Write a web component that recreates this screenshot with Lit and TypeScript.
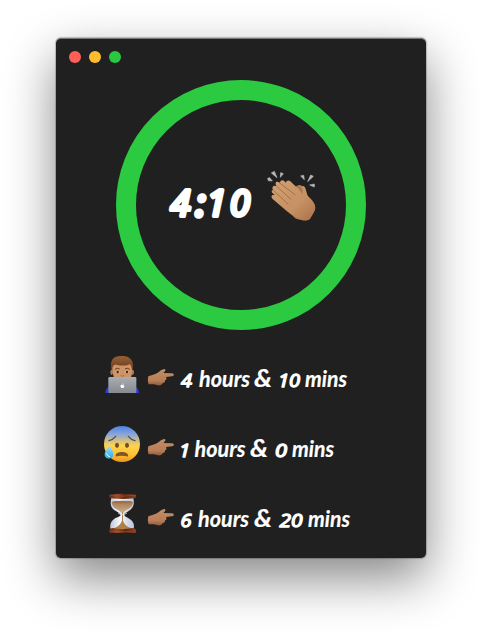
import { LitElement, html, css, svg } from "lit";
import { customElement, property } from "lit/decorators.js";

type Word = { text: string; x: number; width: number; kind: "num" | "word" | "amp" };

@customElement("clap-icon")
class ClapIcon extends LitElement {
  static styles = css`:host { display: block; } svg { display: block; width: 54px; height: 56px; }`;
  render() {
    return html`<svg viewBox="315 24 162 168">
      <defs><linearGradient id="skin" x1="0" y1="0" x2="1" y2="1">
        <stop offset="0" stop-color="#d2a173"/><stop offset=".6" stop-color="#c69163"/><stop offset="1" stop-color="#a9704a"/>
      </linearGradient></defs>
      <g fill="#b6b8ba" stroke="#b6b8ba" stroke-width="2" stroke-linejoin="round">
        <path d="M334 39L343 34L351 53Z"/><path d="M323 55L329 53L337 63L325 62Z"/><path d="M362 38L370 41L361 52Z"/>
        <path d="M422 48L431 46L433 59Z"/><path d="M452 45L460 49L443 65Z"/><path d="M449 75L463 72L463 81Z"/>
      </g>
      <path d="M401 92C406 77 417 71 426 78C433 83 432 94 436 103C442 113 456 121 465 136L464 150L437 181L410 177L399 164Z" fill="#b57f55"/>
      <path d="M402 167L420 170L414 177C405 177 400 172 399 166Z" fill="#9c6743"/>
      <path d="M340 91C333 83 341 74 348 79L349 76C343 68 350 62 357 67L360 69C360 61 367 58 373 63L378 69C378 61 385 59 391 64L427 98C433 89 421 81 428 78C438 77 438 98 444 108C453 118 461 123 465 137C468 146 464 154 459 162L450 177C441 184 426 182 415 177C403 171 389 161 380 153L338 117C331 110 336 102 344 106L342 103C332 96 334 89 341 91Z" fill="url(#skin)"/>
      <g fill="none" stroke="#9c6746" stroke-width="2.5" stroke-linecap="round">
        <path d="M359 69L405 104"/><path d="M350 79L393 118"/><path d="M341 92L384 132"/>
        <path d="M414 78Q423 91 426 99"/>
      </g>
    </svg>`;
  }
}

@customElement("pointer-icon")
class PointerIcon extends LitElement {
  static styles = css`:host { display: block; } svg { display: block; width: 29px; height: 20px; }`;
  render() {
    return html`<svg viewBox="156 51 87 60">
      <defs><linearGradient id="hand" x1="0" y1="0" x2="0" y2="1">
        <stop offset="0" stop-color="#c48d65"/><stop offset=".7" stop-color="#b97f58"/><stop offset="1" stop-color="#8d5a3c"/>
      </linearGradient></defs>
      <path d="M160 79C170 75 179 74 187 69C194 64 202 57 208 57C214 58 211 64 205 69L231 70C238 70 239 79 231 79L213 81C216 85 214 91 210 91C211 96 207 100 203 99C202 105 195 107 188 106L177 103L161 103C158 96 158 87 160 79Z" fill="url(#hand)"/>
      <path d="M193 82L210 81M195 91L208 91M193 99L201 99" fill="none" stroke="#ab7653" stroke-width="1.2" stroke-linecap="round"/>
    </svg>`;
  }
}

@customElement("row-icon")
class RowIcon extends LitElement {
  @property() name = "work";
  static styles = css`:host { display: block; } svg { display: block; width: 40px; height: 40px; }`;

  worker() {
    return html`<svg viewBox="24 8 120 120">
      <defs>
        <linearGradient id="hair" x1="0" y1="0" x2="0" y2="1"><stop offset="0" stop-color="#9a6038"/><stop offset="1" stop-color="#643719"/></linearGradient>
        <linearGradient id="lap" x1="0" y1="0" x2="0" y2="1"><stop offset="0" stop-color="#a9adb2"/><stop offset="1" stop-color="#85898f"/></linearGradient>
      </defs>
      <path d="M30 131C31 117 35 110 47 106L117 106C128 110 132 119 133 131Z" fill="#2438d4"/>
      <path d="M49 60C45 35 49 17 79 17C107 15 119 34 113 60Z" fill="url(#hair)"/>
      <ellipse cx="50" cy="66" rx="4" ry="8" fill="#b27a4f"/><ellipse cx="113" cy="66" rx="4" ry="8" fill="#b27a4f"/>
      <path d="M52 52C56 42 60 43 67 44C82 47 97 46 104 41C110 46 112 57 111 68C110 84 100 96 82 96C62 96 52 81 52 52Z" fill="#cc9467"/>
      <path d="M60 57Q67 51 74 56M90 56Q97 51 104 57" fill="none" stroke="#6b3d20" stroke-width="3"/>
      <ellipse cx="68" cy="65" rx="6" ry="4" fill="#e6dacd"/><ellipse cx="96" cy="65" rx="6" ry="4" fill="#e6dacd"/>
      <circle cx="68" cy="65" r="4" fill="#4d2711"/><circle cx="96" cy="65" r="4" fill="#4d2711"/>
      <path d="M77 76Q82 79 87 76" fill="none" stroke="#a56b43" stroke-width="3"/>
      <rect x="40" y="80" width="84" height="50" rx="4" fill="url(#lap)"/>
      <path d="M82 104C77 101 76 105 77 109C79 115 81 113 83 113C86 115 88 110 88 108C85 106 85 105 87 103C85 101 83 103 82 104ZM82 101Q83 98 85 97Q86 100 82 101" fill="#fff"/>
    </svg>`;
  }

  anxious() {
    return html`<svg viewBox="24 9 120 120">
      <defs>
        <linearGradient id="face" x1="0" y1="0" x2="0" y2="1"><stop offset="0" stop-color="#4f83df"/><stop offset=".22" stop-color="#86a3de"/><stop offset=".4" stop-color="#d0bd84"/><stop offset=".55" stop-color="#ffd34a"/><stop offset=".8" stop-color="#fcc034"/><stop offset="1" stop-color="#f0921a"/></linearGradient>
        <linearGradient id="drop" x1="0" y1="0" x2="0" y2="1"><stop offset="0" stop-color="#b9e9fb"/><stop offset=".5" stop-color="#6cc9f0"/><stop offset="1" stop-color="#2ba8e5"/></linearGradient>
      </defs>
      <circle cx="81" cy="72" r="54" fill="url(#face)"/>
      <path d="M42 62Q54 59 62 49M100 49Q108 59 120 62" fill="none" stroke="#435066" stroke-width="4" stroke-linecap="round"/>
      <ellipse cx="66" cy="76" rx="6" ry="8" fill="#705024"/><ellipse cx="96" cy="76" rx="6" ry="8" fill="#705024"/>
      <path d="M62 106C63 93 98 93 99 106C101 112 95 109 90 108Q80 106 71 108C66 109 61 112 62 106Z" fill="#815424"/>
      <path d="M43 71C46 84 55 91 55 103C55 111 49 116 42 116C35 116 28 111 29 102C30 91 41 85 43 71Z" fill="url(#drop)"/>
      <path d="M35 101Q37 110 44 110" fill="none" stroke="#e8fbff" stroke-width="3" stroke-linecap="round"/>
    </svg>`;
  }

  hourglass() {
    return html`<svg viewBox="24 15 120 120">
      <defs>
        <linearGradient id="wood" x1="0" y1="0" x2="1" y2="0"><stop offset="0" stop-color="#5a2814"/><stop offset=".3" stop-color="#9c4c28"/><stop offset=".6" stop-color="#5d2612"/><stop offset="1" stop-color="#884020"/></linearGradient>
        <linearGradient id="glass" x1="0" y1="0" x2="1" y2="0"><stop offset="0" stop-color="#bdc8dc"/><stop offset=".4" stop-color="#f7f8fb"/><stop offset="1" stop-color="#b7c4dc"/></linearGradient>
        <linearGradient id="sand" x1="0" y1="0" x2="0" y2="1"><stop offset="0" stop-color="#a57b56"/><stop offset="1" stop-color="#d0ad84"/></linearGradient>
      </defs>
      <path d="M49 30H115C119 48 116 61 101 69C91 75 88 76 88 80C88 85 94 86 103 92C116 100 120 110 115 126H47C43 110 48 99 60 91C69 86 77 85 77 80C77 76 71 74 61 68C46 60 45 48 49 30Z" fill="url(#glass)"/>
      <path d="M50 42H114C113 54 106 61 94 66Q88 69 86 74H78Q76 69 69 66C57 61 51 54 50 42Z" fill="url(#sand)"/>
      <ellipse cx="82" cy="42" rx="31" ry="4" fill="#98714f"/>
      <path d="M81 73H84V98C87 108 94 115 108 121Q82 130 57 121C71 115 78 108 81 98Z" fill="#ad7f49"/>
      <path d="M69 75Q82 85 96 75" stroke="#e8eef7" stroke-width="3" fill="none" opacity=".8"/>
      <path d="M42 20Q82 14 123 20V28Q119 33 82 33Q45 33 42 28ZM42 126Q44 120 55 120Q82 127 111 120Q123 121 123 127V134Q82 139 42 134Z" fill="url(#wood)"/>
      <path d="M45 22Q82 27 120 22M45 129Q82 133 119 129" fill="none" stroke="#a85b34" stroke-width="1.5"/>
    </svg>`;
  }

  render() {
    return this.name === "work" ? this.worker() : this.name === "break" ? this.anxious() : this.hourglass();
  }
}

@customElement("time-row")
class TimeRow extends LitElement {
  @property() icon = "work";
  @property({ attribute: false }) words: Word[] = [];
  static styles = css`
    :host { display: flex; height: 40px; }
    pointer-icon { margin: 14px 2px 0 4px; }
    .label { display: block; width: 180px; height: 40px; overflow: visible; }
    text { font-family: "Lato", "Liberation Sans", sans-serif; font-style: italic; font-weight: 700; fill: #fff; stroke: #fff; stroke-width: .2; stroke-linejoin: round; }
    .num { font-size: 17.5px; font-family: "Open Sans", "Noto Sans", sans-serif; font-weight: 500; stroke-width: 1.3; }
    .word { font-size: 22.5px; }
    .amp { font-size: 25px; }
  `;
  render() {
    return html`<row-icon name=${this.icon}></row-icon><pointer-icon></pointer-icon>
      <svg class="label" viewBox="178 0 180 40">
        ${this.words.map((w) => svg`<text class=${w.kind} x=${w.x} y="34" textLength=${w.width} lengthAdjust="spacingAndGlyphs">${w.text}</text>`)}
      </svg>`;
  }
}

@customElement("app-root")
class AppRoot extends LitElement {
  static styles = css`
    :host { display: block; box-sizing: border-box; width: 482px; height: 632px; padding: 38px 56px 74px; background: #fff; overflow: hidden; }
    .window { box-sizing: border-box; height: 520px; display: flex; flex-direction: column; background: #202020; border-radius: 5px; box-shadow: 0 0 1px 1px rgba(0,0,0,.22), 0 20px 50px rgba(0,0,0,.48); border-top: 1px solid #777; }
    .bar { display: flex; gap: 8px; padding: 12px 13px 0; height: 41px; box-sizing: border-box; }
    .dot { width: 12px; height: 12px; border-radius: 50%; }
    .red { background: #ff5f57; } .yellow { background: #febc2e; } .green { background: #28c840; }
    .ring { box-sizing: border-box; width: 250px; height: 250px; border: 20px solid #2bca41; border-radius: 50%; margin: 0 auto; display: flex; padding: 68px 0 0 29px; }
    .time { display: block; width: 90px; height: 56px; margin-right: 10px; overflow: visible; }
    .time text { font: italic 500 36px "Open Sans", "Noto Sans", sans-serif; fill: #fff; stroke: #fff; stroke-width: 4; stroke-linejoin: round; }
    .time .colon { stroke-width: 5.5; }
    .rows { display: flex; flex-direction: column; gap: 30px; padding: 23px 0 0 47px; }
  `;
  render() {
    const rows: { icon: string; words: Word[] }[] = [
      { icon: "work", words: [
        { text: "4", x: 181, width: 11, kind: "num" }, { text: "hours", x: 199, width: 51, kind: "word" },
        { text: "&", x: 254, width: 18, kind: "amp" }, { text: "10", x: 278, width: 22, kind: "num" }, { text: "mins", x: 305, width: 42, kind: "word" }] },
      { icon: "break", words: [
        { text: "1", x: 179, width: 11, kind: "num" }, { text: "hours", x: 194.5, width: 51, kind: "word" },
        { text: "&", x: 250, width: 18, kind: "amp" }, { text: "0", x: 275, width: 12, kind: "num" }, { text: "mins", x: 292, width: 42, kind: "word" }] },
      { icon: "total", words: [
        { text: "6", x: 180.5, width: 11, kind: "num" }, { text: "hours", x: 198, width: 51, kind: "word" },
        { text: "&", x: 254, width: 18, kind: "amp" }, { text: "20", x: 279.5, width: 23, kind: "num" }, { text: "mins", x: 308, width: 42, kind: "word" }] },
    ];
    return html`<div class="window">
      <div class="bar"><span class="dot red"></span><span class="dot yellow"></span><span class="dot green"></span></div>
      <div class="ring">
        <svg class="time" viewBox="165 168 90 56"><text x="170.5" y="215.5">4<tspan class="colon" x="196">:</tspan><tspan x="206.5">1</tspan><tspan x="230">0</tspan></text></svg>
        <clap-icon></clap-icon>
      </div>
      <div class="rows">${rows.map((r) => html`<time-row icon=${r.icon} .words=${r.words}></time-row>`)}</div>
    </div>`;
  }
}
